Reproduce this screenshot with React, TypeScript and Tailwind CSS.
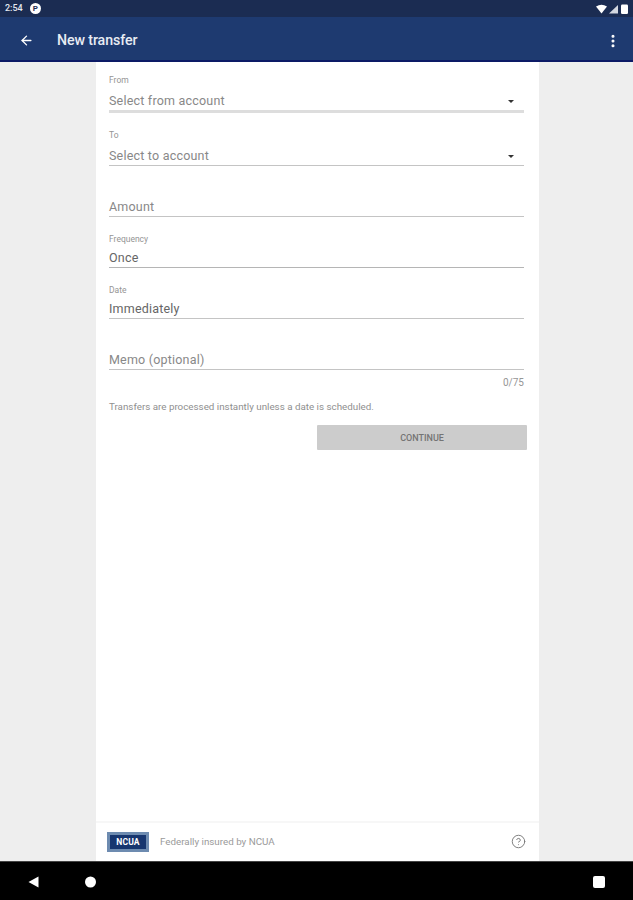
import { ArrowLeft, EllipsisVertical, CircleHelp } from "lucide-react";

const font = { fontFamily: "Roboto, sans-serif" };

const Field = ({
  label,
  value,
  dark,
  caret,
  boxClass,
  className,
}: {
  label?: string;
  value: string;
  dark?: boolean;
  caret?: boolean;
  boxClass: string;
  className: string;
}) => (
  <div className={className}>
    {label && (
      <p className="h-[12px] text-[8.5px] leading-[12px] text-[#949494]">{label}</p>
    )}
    <div className={`flex items-end justify-between ${boxClass}`}>
      <span
        className={`pb-[1px] text-[12.5px] leading-[16px] tracking-[0.2px] ${
          dark ? "text-[#666666]" : "text-[#888888]"
        }`}
      >
        {value}
      </span>
      {caret && (
        <span className="mb-[7px] mr-[10px] h-0 w-0 border-x-[3px] border-t-[3px] border-x-transparent border-t-[#333333]"></span>
      )}
    </div>
  </div>
);

const App = () => {
  return (
    <div className="flex h-[900px] w-[633px] flex-col overflow-hidden bg-[#eeeeee]" style={font}>
      <div className="flex h-[17px] items-center justify-between bg-[#1b2c52] pl-[5px] pr-[4px]">
        <div className="flex items-center gap-[7px]">
          <span className="text-[9px] font-medium leading-none text-[#e4e8f0]">2:54</span>
          <span className="flex h-[11px] w-[11px] items-center justify-center rounded-full bg-white text-[8px] font-bold leading-none text-[#1b2c52]">
            P
          </span>
        </div>
        <svg width="33" height="10" viewBox="0 0 33 10" fill="#ffffff">
          <path d="M0 2.5 Q5.5 -0.8 11 2.5 L5.5 9.5 Z" />
          <path d="M13 9.5 L22 1 L22 9.5 Z" fill="#d4d8e0" />
          <rect x="25" y="0.5" width="7" height="9.5" rx="1.2" />
        </svg>
      </div>

      <div className="flex h-[45px] items-center justify-between border-b-[2px] border-[#0c1a66] bg-[#1e3a70] pl-[19px] pr-[12px] pt-[5px]">
        <div className="flex items-center">
          <ArrowLeft size={15} strokeWidth={2.2} className="text-white" />
          <span className="ml-[23px] text-[14.2px] font-medium tracking-[-0.1px] text-[#e8ecf3]">
            New transfer
          </span>
        </div>
        <EllipsisVertical size={16} strokeWidth={2.6} className="text-white" />
      </div>

      <div className="ml-[96px] flex w-[443px] flex-1 flex-col bg-white">
        <div className="flex-1 pl-[13px] pr-[15px] pt-[12px]">
          <Field
            label="From"
            value="Select from account"
            caret
            boxClass="h-[27px] border-b-[3px] border-[#dddddd]"
            className=""
          />
          <Field
            label="To"
            value="Select to account"
            caret
            boxClass="h-[25px] border-b border-[#c4c4c4]"
            className="mt-[16px]"
          />
          <Field value="Amount" boxClass="h-[24px] border-b border-[#c4c4c4]" className="mt-[27px]" />
          <Field
            label="Frequency"
            value="Once"
            dark
            boxClass="h-[23px] border-b border-[#b5b5b5]"
            className="mt-[16px]"
          />
          <Field
            label="Date"
            value="Immediately"
            dark
            boxClass="h-[23px] border-b border-[#c4c4c4]"
            className="mt-[16px]"
          />
          <Field value="Memo (optional)" boxClass="h-[24px] border-b border-[#c4c4c4]" className="mt-[27px]" />
          <p className="mt-[6px] text-right text-[10px] leading-[14px] text-[#969696]">0/75</p>
          <p className="mt-[10px] text-[9.8px] leading-[14px] text-[#8f8f8f]">
            Transfers are processed instantly unless a date is scheduled.
          </p>
          <div className="mr-[-3px] mt-[11px] flex justify-end">
            <div className="flex h-[25px] w-[210px] items-center justify-center rounded-[1px] bg-[#cccccc] pt-[2px] text-[9px] font-medium text-[#747474]">
              CONTINUE
            </div>
          </div>
        </div>

        <div className="flex h-[40px] items-center justify-between border-t-[2px] border-[#f7f7f7] pl-[11px] pr-[13px]">
          <div className="flex items-center">
            <div className="flex h-[20px] w-[42px] items-center justify-center bg-[#6d8bb0] p-[3px]">
              <div className="flex h-full w-full items-center justify-center bg-[#17366f] text-[8.5px] font-bold tracking-[0.2px] text-white">
                NCUA
              </div>
            </div>
            <span className="ml-[11px] text-[9.8px] text-[#9a9a9a]">Federally insured by NCUA</span>
          </div>
          <CircleHelp size={15} strokeWidth={1.5} className="mb-[2px] text-[#777777]" />
        </div>
      </div>

      <div className="flex h-[39px] items-center justify-between border-t border-[#444444] bg-black pl-[28px] pr-[28px] pt-[1px]">
        <svg width="68" height="12" viewBox="0 0 68 12" fill="#ffffff">
          <path d="M0.5 6 L10.5 0.5 L10.5 11.5 Z" />
          <circle cx="62.5" cy="6" r="5.5" />
        </svg>
        <span className="h-[12px] w-[12px] rounded-[2px] bg-white"></span>
      </div>
    </div>
  );
};

export default App;
